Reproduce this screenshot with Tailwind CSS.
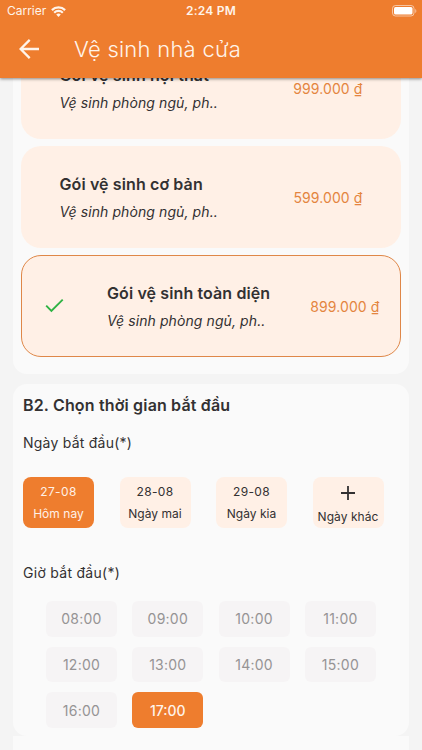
<!DOCTYPE html>
<html lang="vi">
<head>
<meta charset="utf-8">
<meta name="viewport" content="width=device-width, initial-scale=1">
<title>Vệ sinh nhà cửa</title>
<script src="https://cdn.jsdelivr.net/npm/@tailwindcss/browser@4"></script>
</head>
<body class="w-[422px] h-[750px] overflow-hidden bg-[#f4f4f4] font-['Inter','Liberation_Sans',sans-serif] text-[#333132]">
<header class="relative z-10 h-[78px] bg-[#ee7d2e] text-[#fff4ea] shadow-[0_1px_3px_rgba(0,0,0,0.45)]">
  <div class="grid grid-cols-3 items-center h-[22px] px-[7px]">
    <div class="flex items-center gap-[5px]">
      <span class="text-[12px] leading-[22px] tracking-[-0.02px]">Carrier</span>
      <svg class="w-[15px] h-[11px]" viewBox="0 0 15 11" fill="none" stroke="#fff4ea" stroke-width="2.2"><path d="M.9 4.1a9.4 9.4 0 0 1 13.2 0M3.2 6.7a6.2 6.2 0 0 1 8.6 0"/><path d="M7.5 10.9 5.2 8.6a3.3 3.3 0 0 1 4.6 0z" fill="#fff4ea" stroke="none"/></svg>
    </div>
    <span class="text-center text-[12px] leading-[22px] font-semibold tracking-[0.2px]">2:24 PM</span>
    <svg class="justify-self-end w-[25px] h-[12px] -mr-[2px]" viewBox="0 0 25 12" fill="none"><rect x=".5" y=".5" width="21.5" height="10.5" rx="3" stroke="#fff" stroke-opacity=".55"/><rect x="2" y="2" width="18.5" height="7.5" rx="1.5" fill="#fff"/><path d="M23.3 4v4c1.4-.6 1.4-3.4 0-4z" fill="#fff" fill-opacity=".6"/></svg>
  </div>
  <div class="flex items-center h-[54px] pl-[19px]">
    <svg class="w-[21px] h-[20px]" viewBox="0 0 21 20" fill="none" stroke="#fff4ea" stroke-width="2.3"><path d="M20 10H2M10.7 .9 1.6 10l9.1 9.1"/></svg>
    <h1 class="ml-[34px] text-[22px] leading-[30px] font-light tracking-[0.25px] whitespace-nowrap">Vệ sinh nhà cửa</h1>
  </div>
</header>
<main class="-mt-[41px] px-[13px]">
  <section class="flex flex-col gap-[7px] bg-[#fafafa] rounded-b-[14px] pl-[8px] pr-[8.5px] pb-[17px]">
    <article class="flex items-center justify-between h-[102px] rounded-[20px] bg-[#fff0e6] pl-[38.5px] pr-[38px]">
      <div class="whitespace-nowrap"><h3 class="text-[16px] leading-[24px] font-semibold tracking-[0.11px]">Gói vệ sinh nội thất</h3><p class="mt-[5px] text-[14px] leading-[22px] italic tracking-[0.09px]">Vệ sinh phòng ngủ, ph..</p></div>
      <span class="text-[14px] tracking-[0.1px] text-[#e4853f]">999.000 ₫</span>
    </article>
    <article class="flex items-center justify-between h-[102px] rounded-[20px] bg-[#fff0e6] pl-[38.5px] pr-[38px]">
      <div class="whitespace-nowrap"><h3 class="text-[16px] leading-[24px] font-semibold tracking-[0.11px]">Gói vệ sinh cơ bản</h3><p class="mt-[5px] text-[14px] leading-[22px] italic tracking-[0.09px]">Vệ sinh phòng ngủ, ph..</p></div>
      <span class="text-[14px] tracking-[0.1px] text-[#e4853f]">599.000 ₫</span>
    </article>
    <article class="flex items-center h-[102px] rounded-[20px] bg-[#fff0e6] border border-[#df8748] pl-[23px] pr-[20px]">
      <svg class="w-[19px] h-[15px] -mt-[1px]" viewBox="0 0 19 15" fill="none" stroke="#2fb344" stroke-width="1.9"><path d="M1.2 7.7 6.4 12.9 17.7 1.6"/></svg>
      <div class="ml-[43px] whitespace-nowrap"><h3 class="text-[16px] leading-[24px] font-semibold tracking-[0.11px]">Gói vệ sinh toàn diện</h3><p class="mt-[5px] text-[14px] leading-[22px] italic tracking-[0.09px]">Vệ sinh phòng ngủ, ph..</p></div>
      <span class="ml-auto text-[14px] tracking-[0.1px] text-[#e4853f]">899.000 ₫</span>
    </article>
  </section>
  <section class="mt-[10px] h-[352px] bg-[#fafafa] rounded-[14px] px-[10px] pt-[9px]">
    <h2 class="text-[16px] leading-[24px] font-semibold tracking-[0.16px]">B2. Chọn thời gian bắt đầu</h2>
    <h3 class="mt-[15px] text-[14px] leading-[22px] tracking-[0.23px]">Ngày bắt đầu(*)</h3>
    <div class="mt-[23px] grid grid-cols-[repeat(4,71px)] gap-x-[25.5px] text-center text-[12px] leading-[18px] tracking-[0.05px] whitespace-nowrap">
      <button class="flex flex-col items-center gap-[4px] h-[51px] pt-[6px] rounded-[8px] bg-[#ee7d2e] text-[#fff0e6]"><span class="tracking-[0.35px]">27-08</span><span>Hôm nay</span></button>
      <button class="flex flex-col items-center gap-[4px] h-[51px] pt-[6px] rounded-[8px] bg-[#fff0e6]"><span class="tracking-[0.35px]">28-08</span><span>Ngày mai</span></button>
      <button class="flex flex-col items-center gap-[4px] h-[51px] pt-[6px] rounded-[8px] bg-[#fff0e6]"><span class="tracking-[0.35px]">29-08</span><span>Ngày kia</span></button>
      <button class="flex flex-col items-center h-[51px] pt-[9px] rounded-[8px] bg-[#fff0e6]"><svg class="w-[14px] h-[14px] mb-[8px]" viewBox="0 0 14 14" stroke="#333132" stroke-width="1.8"><path d="M7 0v14M0 7h14"/></svg><span>Ngày khác</span></button>
    </div>
    <h3 class="mt-[34px] text-[14px] leading-[22px] tracking-[0.28px]">Giờ bắt đầu(*)</h3>
    <div class="mt-[17px] ml-[23px] grid grid-cols-[repeat(4,71px)] auto-rows-[35.5px] gap-x-[15.3px] gap-y-[10.2px] text-[14px] tracking-[0.25px] text-[#959394]">
      <button class="rounded-[6px] bg-[#f6f4f5]">08:00</button>
      <button class="rounded-[6px] bg-[#f6f4f5]">09:00</button>
      <button class="rounded-[6px] bg-[#f6f4f5]">10:00</button>
      <button class="rounded-[6px] bg-[#f6f4f5]">11:00</button>
      <button class="rounded-[6px] bg-[#f6f4f5]">12:00</button>
      <button class="rounded-[6px] bg-[#f6f4f5]">13:00</button>
      <button class="rounded-[6px] bg-[#f6f4f5]">14:00</button>
      <button class="rounded-[6px] bg-[#f6f4f5]">15:00</button>
      <button class="rounded-[6px] bg-[#f6f4f5]">16:00</button>
      <button class="rounded-[6px] bg-[#ee7d2e] text-[#fff4ea] font-medium tracking-[0px]">17:00</button>
    </div>
  </section>
  <section class="h-[40px] bg-[#fafafa]"></section>
</main>
</body>
</html>
